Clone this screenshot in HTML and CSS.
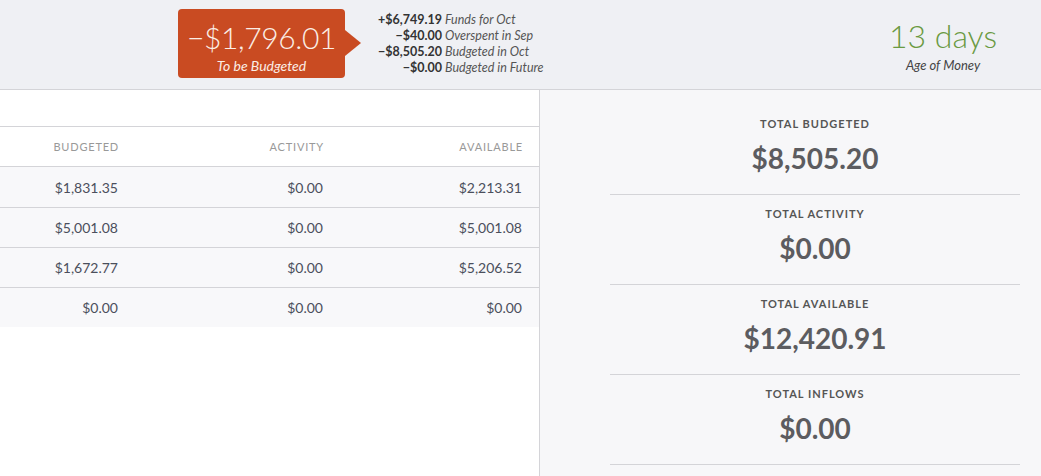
FILE: index.html
```html
<!DOCTYPE html>
<html>
<head>
<meta charset="utf-8" />
<title>Budget</title>
<link rel="stylesheet" href="styles.css">
</head>
<body>

<div class="header">
  <div class="tbb">
    <div class="tbb-amount">&minus;$1,796.01</div>
    <div class="tbb-label">To be Budgeted</div>
  </div>
  <div class="tbb-arrow"></div>
  <ul class="calc">
    <li><strong>+$6,749.19</strong><em>Funds for Oct</em></li>
    <li><strong>&minus;$40.00</strong><em>Overspent in Sep</em></li>
    <li><strong>&minus;$8,505.20</strong><em>Budgeted in Oct</em></li>
    <li><strong>&minus;$0.00</strong><em>Budgeted in Future</em></li>
  </ul>
  <div class="aom">
    <div class="aom-days">13 days</div>
    <div class="aom-label">Age of Money</div>
  </div>
</div>

<div class="main">
  <div class="budget">
    <div class="toolbar"></div>
    <div class="row head">
      <span>Budgeted</span><span>Activity</span><span>Available</span>
    </div>
    <div class="row first">
      <span>$1,831.35</span><span>$0.00</span><span>$2,213.31</span>
    </div>
    <div class="row">
      <span>$5,001.08</span><span>$0.00</span><span>$5,001.08</span>
    </div>
    <div class="row">
      <span>$1,672.77</span><span>$0.00</span><span>$5,206.52</span>
    </div>
    <div class="row last">
      <span>$0.00</span><span>$0.00</span><span>$0.00</span>
    </div>
  </div>

  <div class="inspector">
    <div class="total">
      <h3>Total Budgeted</h3>
      <div class="total-value">$8,505.20</div>
    </div>
    <div class="total">
      <h3>Total Activity</h3>
      <div class="total-value">$0.00</div>
    </div>
    <div class="total">
      <h3>Total Available</h3>
      <div class="total-value">$12,420.91</div>
    </div>
    <div class="total">
      <h3>Total Inflows</h3>
      <div class="total-value">$0.00</div>
    </div>
  </div>
</div>

</body>
</html>
```

FILE: styles.css
```css
*{margin:0;padding:0;box-sizing:border-box;}
body{font-family:Lato,"Open Sans",sans-serif;color:#555;background:#fff;overflow:hidden;}

.header{height:90px;background:#eff0f4;border-bottom:1px solid #d4d4d8;display:flex;align-items:flex-start;padding-left:178px;}
.tbb{margin-top:9px;width:167px;height:69px;background:#c94b22;border-radius:4px;color:#fbeee6;text-align:center;}
.tbb-amount{font-size:30px;font-weight:300;line-height:34px;padding-top:11px;letter-spacing:-0.4px;}
.tbb-label{font-size:14px;font-style:italic;line-height:16px;margin-top:4px;}
.tbb-arrow{margin-top:30px;width:0;height:0;border-left:16px solid #c94b22;border-top:13px solid transparent;border-bottom:13px solid transparent;}
.calc{list-style:none;margin:12px 0 0 15px;font-size:12.5px;line-height:16px;color:#333;}
.calc li{display:flex;}
.calc strong{width:66px;text-align:right;font-weight:700;}
.calc em{margin-left:3px;color:#555;}
.aom{margin-left:auto;width:196px;text-align:center;padding-top:17px;}
.aom-days{font-size:32px;font-weight:300;color:#6a9a42;line-height:38px;}
.aom-label{font-size:13px;font-style:italic;color:#444;line-height:16px;margin-top:2px;}

.main{display:flex;height:386px;}
.budget{width:540px;border-right:1px solid #d4d4d8;}
.toolbar{height:37px;border-bottom:1px solid #d4d4d8;}
.row{display:grid;grid-template-columns:135px 205px 199px;height:40px;align-items:center;background:#f8f8fa;border-bottom:1px solid #d4d4d8;font-size:14px;color:#4b4f5c;}
.row span{text-align:right;padding-right:17px;}
.row.head{background:#fff;font-size:11px;text-transform:uppercase;letter-spacing:0.8px;color:#999;}
.row.head span{padding-right:16px;}
.row.first{height:41px;}
.row.last{border-bottom:none;height:39px;}

.inspector{flex:1;background:#f7f7f9;padding:15px 21px 0 70px;}
.total{text-align:center;padding:12px 0 18px;border-bottom:1px solid #d4d4d8;}
.total h3{font-size:11px;font-weight:700;text-transform:uppercase;letter-spacing:1px;line-height:14px;color:#555;}
.total-value{font-size:28px;font-weight:700;line-height:36px;margin-top:9px;color:#5c5c60;}
```
